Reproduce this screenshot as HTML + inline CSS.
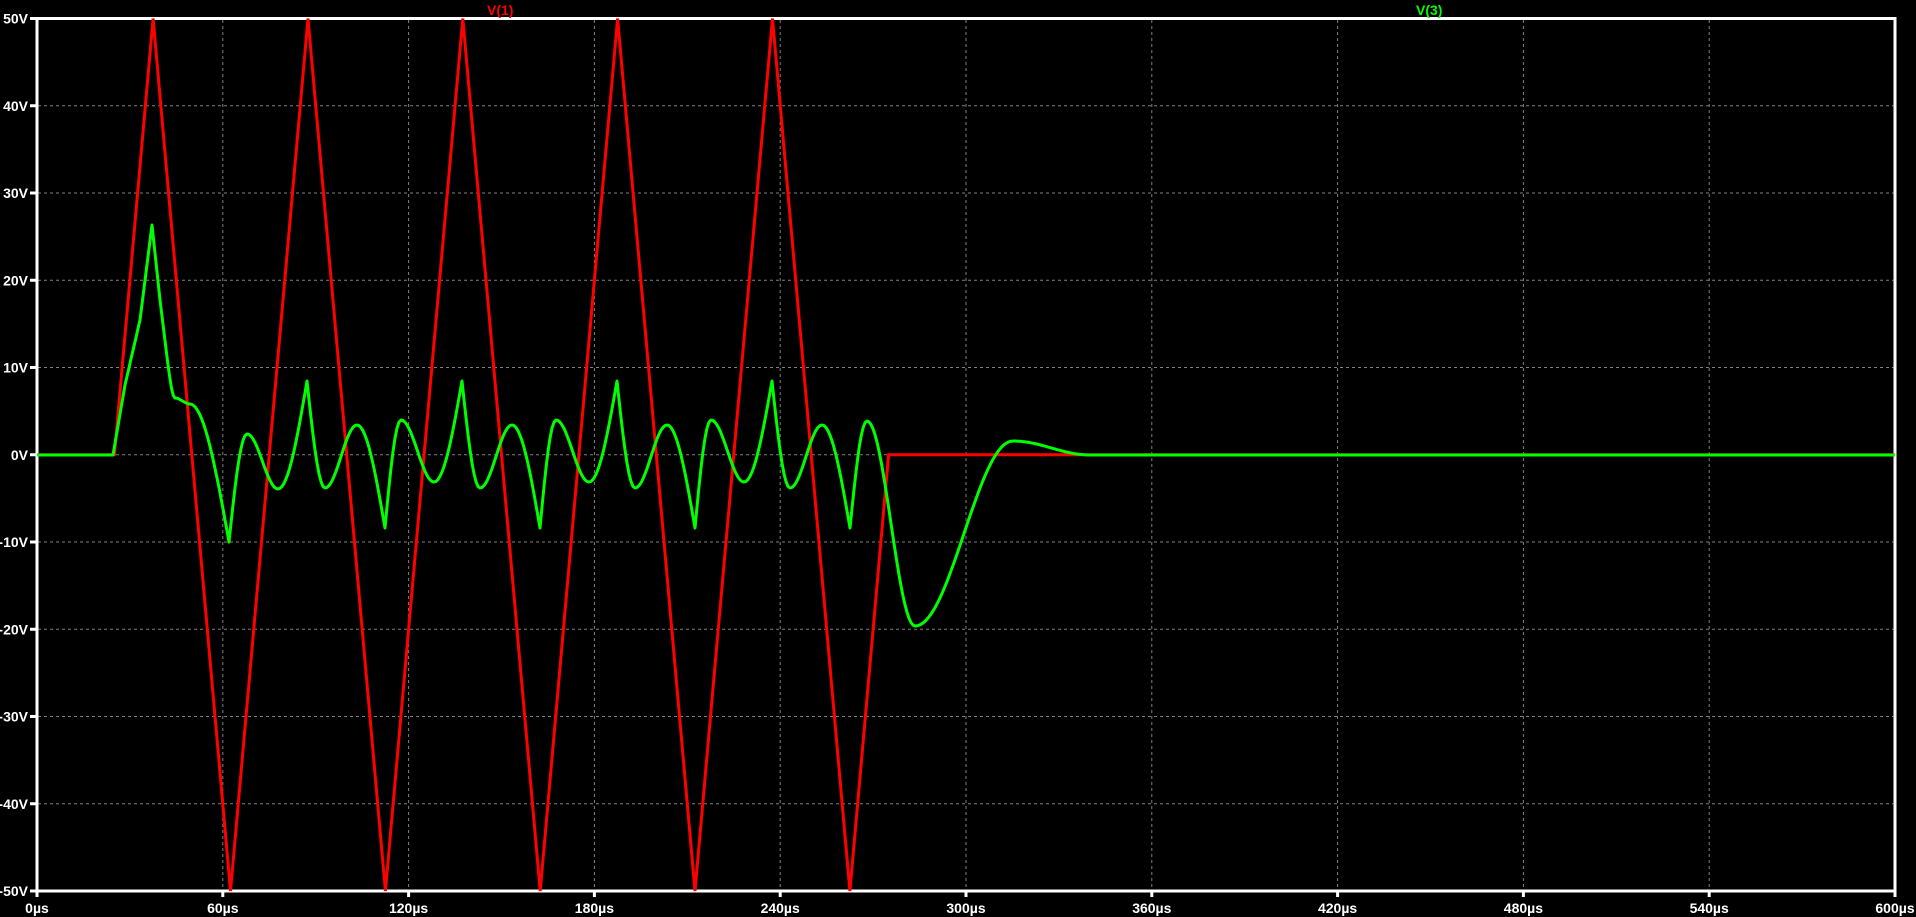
<!DOCTYPE html>
<html><head><meta charset="utf-8"><style>
html,body{margin:0;padding:0;background:#000;width:1916px;height:917px;overflow:hidden}
svg{display:block}
text{font-family:"Liberation Sans",sans-serif;font-weight:bold;font-size:14px}
</style></head><body>
<svg id="s" width="1916" height="917" viewBox="0 0 1916 917" xmlns="http://www.w3.org/2000/svg">
<rect width="1916" height="917" fill="#000"/>
<g id="grid" stroke="#808080" stroke-width="1" stroke-dasharray="3,3" fill="none"></g>
<g id="lab" fill="#fff"></g>
<rect x="37" y="18.5" width="1858" height="872.5" fill="none" stroke="#fff" stroke-width="3"/>
<text x="487" y="15" fill="#f00" font-size="13">V(1)</text>
<text x="1416" y="15" fill="#0f0" font-size="13">V(3)</text>
<path id="red" fill="none" stroke="#f00" stroke-width="3" stroke-linejoin="miter"/>
<path id="grn" fill="none" stroke="#0f0" stroke-width="3" stroke-linejoin="round"/>
</svg>
<script>
var X=function(t){return 37+t*1858/600};
var Y=function(v){return 18.5+(50-v)*8.725};
var g=document.getElementById('grid'),l=document.getElementById('lab'),NS='http://www.w3.org/2000/svg';
function el(p,n,a,txt){var e=document.createElementNS(NS,n);for(var k in a)e.setAttribute(k,a[k]);if(txt)e.textContent=txt;p.appendChild(e);return e;}
for(var i=1;i<10;i++){var x=X(i*60);el(g,'line',{x1:x,y1:20,x2:x,y2:890});}
for(var v=-40;v<=40;v+=10){var y=Y(v);el(g,'line',{x1:38,y1:y,x2:1894,y2:y});}
var s=document.getElementById('s');
for(var i=0;i<=10;i++){var x=X(i*60);el(s,'line',{x1:x,y1:891,x2:x,y2:897,stroke:'#fff','stroke-width':3});
el(l,'text',{x:x,y:913,'text-anchor':'middle'},(i*60)+'\u00b5s');}
for(var v=-50;v<=50;v+=10){var y=Y(v);el(s,'line',{x1:30,y1:y,x2:37,y2:y,stroke:'#fff','stroke-width':3});
el(l,'text',{x:28,y:y+5,'text-anchor':'end'},v+'V');}
var r=[[0,0],[25,0],[37.5,50]];
for(var k=0;k<5;k++){r.push([62.5+k*50,-50]);if(k<4)r.push([87.5+k*50,50]);}
r.push([275,0],[600,0]);
document.getElementById('red').setAttribute('d','M'+r.map(function(p){return X(p[0]).toFixed(1)+','+Y(p[1]).toFixed(1)}).join(' L'));
var P=[[37,455,1],[113,455,1],[125,385,1],[140,320,1],[152,225,1],[160,300,1],[168,365,1],[175,398,0],[190,404,0],[229,542,1],[247,434,0],[278,489,0],[307,381,1],[325,488,0],[357,425,0],[385,528,1]];
for(var k=0;k<3;k++){var o=k*155;P.push([401+o,420,0],[434+o,482,0],[462+o,381,1],[480+o,488,0],[512+o,425,0],[540+o,528,1]);}
P.push([867,421,0],[915,626,0],[1013,441,0],[1090,455,0],[1895,455,0]);
var d='M'+P[0][0]+','+P[0][1];
for(var i=1;i<P.length;i++){var a=P[i-1],b=P[i],n=Math.max(2,Math.round((b[0]-a[0])/2));
for(var j=1;j<=n;j++){var s2=j/n,f;
if(a[2]&&b[2])f=s2;else if(b[2])f=1-Math.cos(Math.PI*s2/2);else if(a[2])f=Math.sin(Math.PI*s2/2);else f=0.5-0.5*Math.cos(Math.PI*s2);
d+=' L'+(a[0]+(b[0]-a[0])*s2).toFixed(1)+','+(a[1]+(b[1]-a[1])*f).toFixed(1);}}
document.getElementById('grn').setAttribute('d',d);
</script>
</body></html>
